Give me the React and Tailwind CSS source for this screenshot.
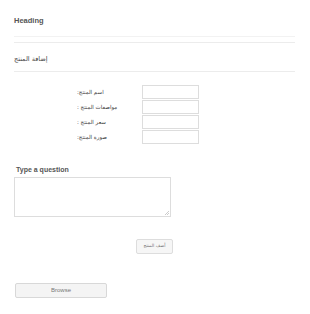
export default function App() {
  const rows = [":اسم المنتج", ": مواصفات المنتج", ": سعر المنتج", ":صورة المنتج"];
  return (
    <div className="w-[310px] h-[314px] bg-white overflow-hidden" style={{ fontFamily: '"Liberation Sans", "DejaVu Sans", sans-serif' }}>
      <div className="px-[14px] pr-[15px]">
        <div className="pt-[16px] text-[7.5px] leading-[10px] font-bold text-[#555]">Heading</div>
        <div className="mt-[10px] h-px bg-[#f2f2f2]" />
        <div className="mt-[5px] h-px bg-[#ececec]" />
        <div className="mt-[12px] text-[6.5px] leading-[9px] text-[#444]" style={{ fontFamily: '"DejaVu Sans", sans-serif' }}>إضافة المنتج</div>
        <div className="mt-[7px] h-px bg-[#ececec]" />
      </div>
      <div className="mt-[13px] flex flex-col gap-px">
        {rows.map((r) => (
          <div key={r} className="flex items-center h-[14px]">
            <div className="ml-[77px] w-[65px] text-[5.5px] text-[#444]" style={{ fontFamily: '"DejaVu Sans", sans-serif' }}>{r}</div>
            <div className="w-[57px] h-[14px] border border-[#ddd] bg-white" />
          </div>
        ))}
      </div>
      <div className="mt-[21px] pl-[16px] text-[7px] leading-[9px] font-bold text-[#555]">Type a question</div>
      <div className="ml-[14px] mt-[3px] w-[157px] h-[40px] border border-[#ddd] relative">
        <svg className="absolute right-[1px] bottom-[1px]" width="4" height="4" viewBox="0 0 4 4">
          <path d="M4 0L0 4M4 2L2 4" stroke="#aaa" strokeWidth="0.6" />
        </svg>
      </div>
      <div className="mt-[22px] ml-[136px] w-[37px] h-[15px] border border-[#ddd] bg-[#f6f6f6] rounded-[2px] flex items-center justify-center text-[4.5px] text-[#777]" style={{ fontFamily: '"DejaVu Sans", sans-serif' }}>أضف المنتج</div>
      <div className="mt-[29px] ml-[15px] w-[92px] h-[15px] border border-[#d8d8d8] bg-[#f4f4f4] rounded-[2px] flex items-center justify-center text-[6px] text-[#777]">Browse</div>
    </div>
  );
}
